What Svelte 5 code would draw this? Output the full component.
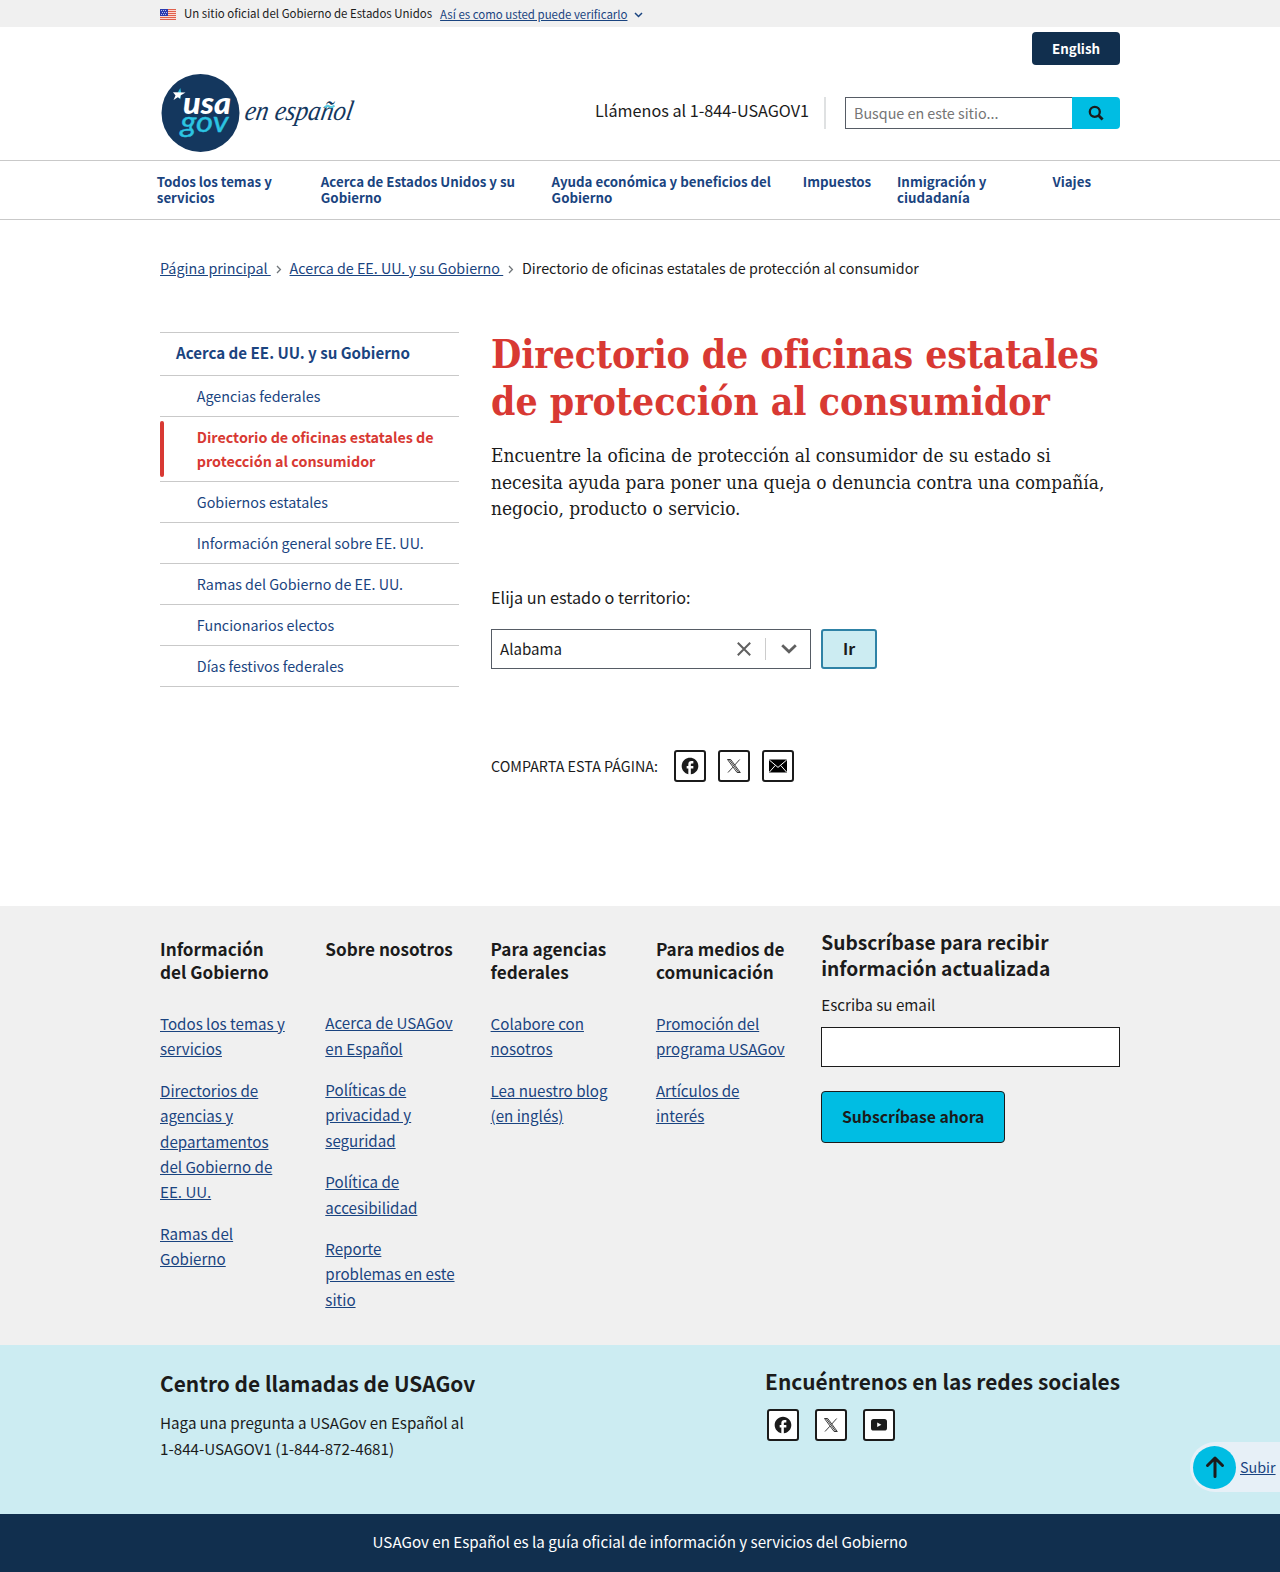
<script>
  const nav = [
    'Todos los temas y\nservicios',
    'Acerca de Estados Unidos y su\nGobierno',
    'Ayuda económica y beneficios del\nGobierno',
    'Impuestos',
    'Inmigración y\nciudadanía',
    'Viajes'
  ];
  const side = [
    { label: 'Agencias federales' },
    { label: 'Directorio de oficinas estatales de\nprotección al consumidor', current: true },
    { label: 'Gobiernos estatales' },
    { label: 'Información general sobre EE. UU.' },
    { label: 'Ramas del Gobierno de EE. UU.' },
    { label: 'Funcionarios electos' },
    { label: 'Días festivos federales' }
  ];
  const columns = [
    {
      title: 'Información\ndel Gobierno',
      links: [
        'Todos los temas y\nservicios',
        'Directorios de\nagencias y\ndepartamentos\ndel Gobierno de\nEE. UU.',
        'Ramas del\nGobierno'
      ]
    },
    {
      title: 'Sobre nosotros',
      links: [
        'Acerca de USAGov\nen Español',
        'Políticas de\nprivacidad y\nseguridad',
        'Política de\naccesibilidad',
        'Reporte\nproblemas en este\nsitio'
      ]
    },
    { title: 'Para agencias\nfederales', links: ['Colabore con\nnosotros', 'Lea nuestro blog\n(en inglés)'] },
    { title: 'Para medios de\ncomunicación', links: ['Promoción del\nprograma USAGov', 'Artículos de\ninterés'] }
  ];
</script>

{#snippet icon(name)}
  {#if name === 'facebook'}
    <svg width="20" height="20" viewBox="0 0 24 24">
      <path fill="#1b1b1b" d="M22 12c0-5.52-4.48-10-10-10S2 6.48 2 12c0 4.84 3.44 8.87 8 9.8V15H8v-3h2V9.5C10 7.57 11.57 6 13.5 6H16v3h-2c-.55 0-1 .45-1 1v2h3v3h-3v6.95c5.05-.5 9-4.76 9-9.95z" />
    </svg>
  {:else if name === 'x'}
    <svg width="16" height="16" viewBox="0 0 16 16" fill="none" stroke="#1b1b1b" stroke-width=".85">
      <path d="M1.5 1.5h3.2l9.6 13h-3.2zM3.2 1.5l9.6 13M13.7 1.5 8.6 7.2M6.9 9.2 2 14.5" />
    </svg>
  {:else if name === 'mail'}
    <svg width="18" height="14" viewBox="0 0 18 14">
      <rect width="18" height="13" y=".5" rx=".6" fill="#000" />
      <path d="M.3 1 9 8.4 17.7 1M.3 13.2 6.3 6.4M17.7 13.2 11.7 6.4" fill="none" stroke="#fff" stroke-width="1" />
    </svg>
  {:else}
    <svg width="16" height="12" viewBox="0 0 16 12">
      <rect width="16" height="11.5" rx="2.6" fill="#1b1b1b" />
      <path d="M6.2 3.4v4.7l4.2-2.35z" fill="#fff" />
    </svg>
  {/if}
{/snippet}

<div class="banner">
  <svg class="flag" width="16" height="11" viewBox="0 0 16 11">
    <rect width="16" height="11" fill="#fbd9d2" />
    <path d="M0 .5h16M0 2.5h16M0 4.5h16M0 6.5h16M0 8.5h16M0 10.5h16" stroke="#e0604c" />
    <rect width="8" height="7" fill="#2c3bb0" />
    <path d="M1 1.500h6M2 3.500h5M1 5.500h6" stroke="#b9bfec" stroke-dasharray="1 1" />
  </svg>
  <span>Un sitio oficial del Gobierno de Estados Unidos</span>
  <a class="verify" href="#verificar">Así es como usted puede verificarlo</a>
  <svg class="caret" width="9" height="6" viewBox="0 0 9 6"><path d="m1 1 3.500 3.500L8 1" fill="none" stroke="#1a4480" stroke-width="1.500" /></svg>
</div>

<header>
  <svg class="logo" width="200" height="80" viewBox="0 0 200 80">
    <circle cx="40.5" cy="40" r="39" fill="#14375e" />
    <path d="m17.500 20 2.800-5 .8 4.500-.8 7-2.500-3z" fill="#2cc4e2" />
    <path d="m13 19.300 12.500.3-5 2.800-.4 3.200-2.300-1.400-4.300 2.800 2-4.400z" fill="#fff" />
    <text class="usa" x="23" y="41" textLength="48" lengthAdjust="spacingAndGlyphs">usa</text>
    <text class="gov" x="20.500" y="58.500" textLength="48" lengthAdjust="spacingAndGlyphs">gov</text>
    <text class="script" x="85" y="47" textLength="108" lengthAdjust="spacingAndGlyphs">en español</text>
    <path d="M164.500 34.500q3-2.600 5-1t5-1" fill="none" stroke="#5ccbe0" stroke-width="2" />
  </svg>
  <div class="tools">
    <a class="english" href="#en">English</a>
    <div class="contact">
      <span class="call">Llámenos al 1-844-USAGOV1</span>
      <form class="search">
        <input placeholder="Busque en este sitio..." aria-label="Buscar" />
        <button type="button" aria-label="Buscar">
          <svg width="16" height="16" viewBox="0 0 16 16" fill="none" stroke="#1b1b1b"><circle cx="6.800" cy="6.800" r="5" stroke-width="2.300" /><path d="m10.300 10.300 4.300 4.300" stroke-width="2.800" /></svg>
        </button>
      </form>
    </div>
  </div>
</header>

<nav class="main-nav">
  {#each nav as item}<a href="#nav">{item}</a>{/each}
</nav>

<nav class="crumbs">
  <a href="#inicio">Página principal&nbsp;</a>
  <svg width="6" height="9" viewBox="0 0 6 9"><path d="m1 1 3.400 3.500L1 8" fill="none" stroke="#71767a" stroke-width="1.300" /></svg>
  <a href="#acerca">Acerca de EE. UU. y su Gobierno&nbsp;</a>
  <svg width="6" height="9" viewBox="0 0 6 9"><path d="m1 1 3.400 3.500L1 8" fill="none" stroke="#71767a" stroke-width="1.300" /></svg>
  <span>Directorio de oficinas estatales de protección al consumidor</span>
</nav>

<main>
  <aside>
    <a class="side-title" href="#acerca">Acerca de EE. UU. y su Gobierno</a>
    {#each side as item}
      <a class="side-item" class:current={item.current} href="#seccion">{item.label}</a>
    {/each}
  </aside>
  <article>
    <h1><span>Directorio de oficinas estatales</span><br />de protección al consumidor</h1>
    <p class="intro">Encuentre la oficina de protección al consumidor de su estado si<br />necesita ayuda para poner una queja o denuncia contra una compañía,<br />negocio, producto o servicio.</p>
    <div class="label">Elija un estado o territorio:</div>
    <div class="picker">
      <div class="select">
        <span>Alabama</span>
        <svg width="14" height="14" viewBox="0 0 14 14"><path d="m.8.8 12.400 12.400M13.200.8.8 13.200" stroke="#606060" stroke-width="2" /></svg>
        <i></i>
        <svg width="16" height="10" viewBox="0 0 16 10"><path d="m1.200 1.300 6.800 6.500 6.800-6.500" fill="none" stroke="#606060" stroke-width="2.800" /></svg>
      </div>
      <button class="go" type="button">Ir</button>
    </div>
    <div class="share">
      <span>COMPARTA ESTA PÁGINA:</span>
      {#each ['facebook', 'x', 'mail'] as name}<a class="square" href="#compartir" aria-label={name}>{@render icon(name)}</a>{/each}
    </div>
  </article>
</main>

<footer>
  <div class="links">
    {#each columns as col}
      <section>
        <h3>{col.title}</h3>
        {#each col.links as link}<p><a href="#pie">{link}</a></p>{/each}
      </section>
    {/each}
    <section class="subscribe">
      <h2>{'Subscríbase para recibir\ninformación actualizada'}</h2>
      <label for="email">Escriba su email</label>
      <input id="email" />
      <button type="button">Subscríbase ahora</button>
    </section>
  </div>
  <div class="help">
    <section>
      <h2>Centro de llamadas de USAGov</h2>
      <p>Haga una pregunta a USAGov en Español al<br />1-844-USAGOV1 (1-844-872-4681)</p>
    </section>
    <section class="social">
      <h2>Encuéntrenos en las redes sociales</h2>
      <div class="squares">
        {#each ['facebook', 'x', 'youtube'] as name}<a class="square" href="#red" aria-label={name}>{@render icon(name)}</a>{/each}
      </div>
    </section>
  </div>
  <div class="tagline">USAGov en Español es la guía oficial de información y servicios del Gobierno</div>
</footer>

<a class="top" href="#top">
  <b><svg width="20" height="24" viewBox="0 0 20 24"><path d="M10 21.500V3M2.500 10.500 10 3l7.500 7.500" fill="none" stroke="#1b1b1b" stroke-width="3" stroke-linecap="round" stroke-linejoin="round" /></svg></b>
  <span>Subir</span>
</a>

<style>
  :global(body) {
    background: #fff;
    color: #1b1b1b;
    font-family: 'Noto Sans CJK SC', 'Noto Sans', sans-serif;
    font-size: 14.32px;
  }
  :global(*) { box-sizing: border-box; }
  a { color: #1a4480; }
  svg { display: block; flex: none; }
  input, button { font: inherit; color: inherit; margin: 0; }
  h1, h2, h3, p { margin: 0; }

  .banner {
    height: 27px;
    padding: 0 160px;
    display: flex;
    align-items: flex-start;
    background: #f0f0f0;
    font-size: 11.46px;
    line-height: 26px;
  }
  .flag { margin: 9px 8px 0 0; }
  .verify { margin: 1px 0 0 8px; }
  .caret { margin: 12px 0 0 7px; }

  header {
    height: 133px;
    padding: 0 160px;
    display: flex;
    justify-content: space-between;
  }
  .logo { margin-top: 46px; overflow: visible; }
  .usa, .gov { font-family: Lato, sans-serif; font-style: italic; font-weight: 900; font-size: 31px; fill: #fff; }
  .gov { font-weight: 400; font-size: 29.500px; fill: #2cc4e2; stroke: #2cc4e2; stroke-width: .4; }
  .script { font-family: 'Liberation Serif', serif; font-style: italic; font-size: 28px; fill: #14375e; transform: translateX(7px) skewX(-10deg); }
  .tools { display: flex; flex-direction: column; align-items: flex-end; }
  .english {
    margin-top: 5px;
    width: 88px;
    height: 33px;
    border-radius: 4px;
    background: #112f4e;
    color: #fff;
    font-weight: 700;
    font-size: 13.35px;
    line-height: 33px;
    text-align: center;
    text-decoration: none;
  }
  .contact { display: flex; margin-top: 32px; height: 32px; }
  .call { font-size: 16.19px; line-height: 27px; padding-right: 15px; border-right: 2px solid #dfe1e2; margin-right: 19px; }
  .search { display: flex; }
  .search input {
    width: 227px;
    height: 32px;
    padding: 0 0 2px 8px;
    border: 1px solid #565c65;
    border-right: 0;
    border-radius: 0;
    background: #fff;
  }
  .search input::placeholder { color: #757575; }
  .search button {
    width: 48px;
    padding: 0;
    display: grid;
    place-items: center;
    border: 0;
    border-radius: 0 4px 4px 0;
    background: #00bde3;
  }

  .main-nav {
    height: 60px;
    padding: 12.500px 0 0 156.800px;
    display: grid;
    grid-template-columns: 164px 230.800px 251.200px 94.200px 155.500px 1fr;
    border-top: 1px solid #c9c9c9;
    border-bottom: 1px solid #c9c9c9;
  }
  .main-nav a { font-size: 13.3px; font-weight: 700; line-height: 16px; text-decoration: none; white-space: pre; }

  .crumbs { display: flex; align-items: center; height: 24px; margin: 36px 160px 0; line-height: 24px; white-space: pre; }
  .crumbs svg { margin: 3px 7.800px 0 5px; }

  main { display: flex; gap: 32px; height: 574px; padding: 0 160px; margin-top: 52px; }
  aside { width: 299px; }
  aside a { display: block; text-decoration: none; white-space: pre; border-bottom: 1px solid #c9c9c9; }
  .side-title { border-top: 1px solid #c9c9c9; height: 44px; padding-left: 16px; font-weight: 700; font-size: 15.14px; line-height: 39px; }
  .side-item { padding: 8px 0 8px 36.800px; line-height: 24px; position: relative; }
  .current { color: #d83933; font-weight: 700; }
  .current::before { content: ''; position: absolute; left: 0; top: 4px; bottom: 4px; width: 4px; border-radius: 2px; background: #d83933; }

  h1, .intro { font-family: 'DejaVu Serif Condensed', 'DejaVu Serif', serif; font-stretch: condensed; font-variant-ligatures: none; white-space: nowrap; }
  h1 { margin-top: -1px; color: #d83933; font-size: 38.800px; font-weight: 700; line-height: 47px; }
  h1 span { letter-spacing: -.1px; }
  .intro { margin-top: 17px; font-size: 18.950px; line-height: 26.500px; }
  .label { margin-top: 61px; font-size: 16.190px; line-height: 28px; }
  .picker { display: flex; gap: 10px; margin-top: 18px; height: 40px; }
  .select { width: 320px; border: 1px solid #565c65; display: flex; align-items: center; padding: 0 13px 0 8px; }
  .select span { flex: 1; font-size: 15.1px; line-height: 36px; padding-bottom: 2px; }
  .select i { width: 1px; height: 22px; margin: 0 15px 0 14px; background: #ccc; }
  .go { width: 56px; padding: 0; border: 2px solid #2e82a6; border-radius: 3px; background: #ccecf2; font-size: 15.9px; font-weight: 700; line-height: 34px; }
  .share { display: flex; align-items: center; margin-top: 81px; height: 32px; }
  .share span { width: 171px; }
  .share .square { margin-left: 12px; }
  .square { width: 32px; height: 32px; display: grid; place-items: center; border: 2px solid #1b1b1b; border-radius: 3px; background: #fff; }

  .links {
    height: 439px;
    padding: 0 160px;
    display: grid;
    grid-template-columns: repeat(4, 165.300px) 1fr;
    background: #f0f0f0;
  }
  .links section { padding-top: 31px; }
  h3 { height: 73.900px; font-size: 17.150px; line-height: 23px; white-space: pre; }
  .links section:nth-child(2) h3 { height: 73.200px; }
  .links p { font-size: 15.140px; line-height: 25.400px; white-space: pre; margin-bottom: 16px; }
  .links .subscribe { padding-top: 23px; width: 299px; }
  .subscribe h2 { font-size: 19.200px; line-height: 26px; white-space: pre; }
  .subscribe label { display: block; margin-top: 10px; font-size: 15.200px; line-height: 26px; }
  .subscribe input { display: block; margin-top: 10px; width: 299px; height: 40px; border: 1px solid #1b1b1b; background: #fff; }
  .subscribe button { margin-top: 24px; width: 184px; height: 52px; padding: 0 0 2px; border: 1px solid #1b1b1b; border-radius: 4px; background: #00bde3; font-size: 15.750px; font-weight: 700; }

  .help { height: 169px; padding: 0 160px; display: flex; justify-content: space-between; background: #ccecf2; white-space: nowrap; }
  .help h2 { font-size: 20.870px; line-height: 32px; margin-top: 22px; }
  .help p { font-size: 15.200px; line-height: 25.600px; margin-top: 11.300px; }
  .help .social h2 { margin-top: 20px; }
  .squares { display: flex; gap: 16px; padding-left: 2px; margin-top: 12px; }
  .tagline { height: 58px; background: #112f4e; color: #fff; font-size: 15.160px; line-height: 55px; text-align: center; }

  .top {
    position: fixed;
    right: 0;
    bottom: 80px;
    width: 90px;
    height: 50px;
    padding-left: 3px;
    display: flex;
    align-items: center;
    gap: 4px;
    border-radius: 25px 0 0 25px;
    background: #e7f0f7;
  }
  .top span { padding-bottom: 2px; }
  .top b { width: 43px; height: 43px; border-radius: 50%; background: #00bde3; display: grid; place-items: center; }
</style>
